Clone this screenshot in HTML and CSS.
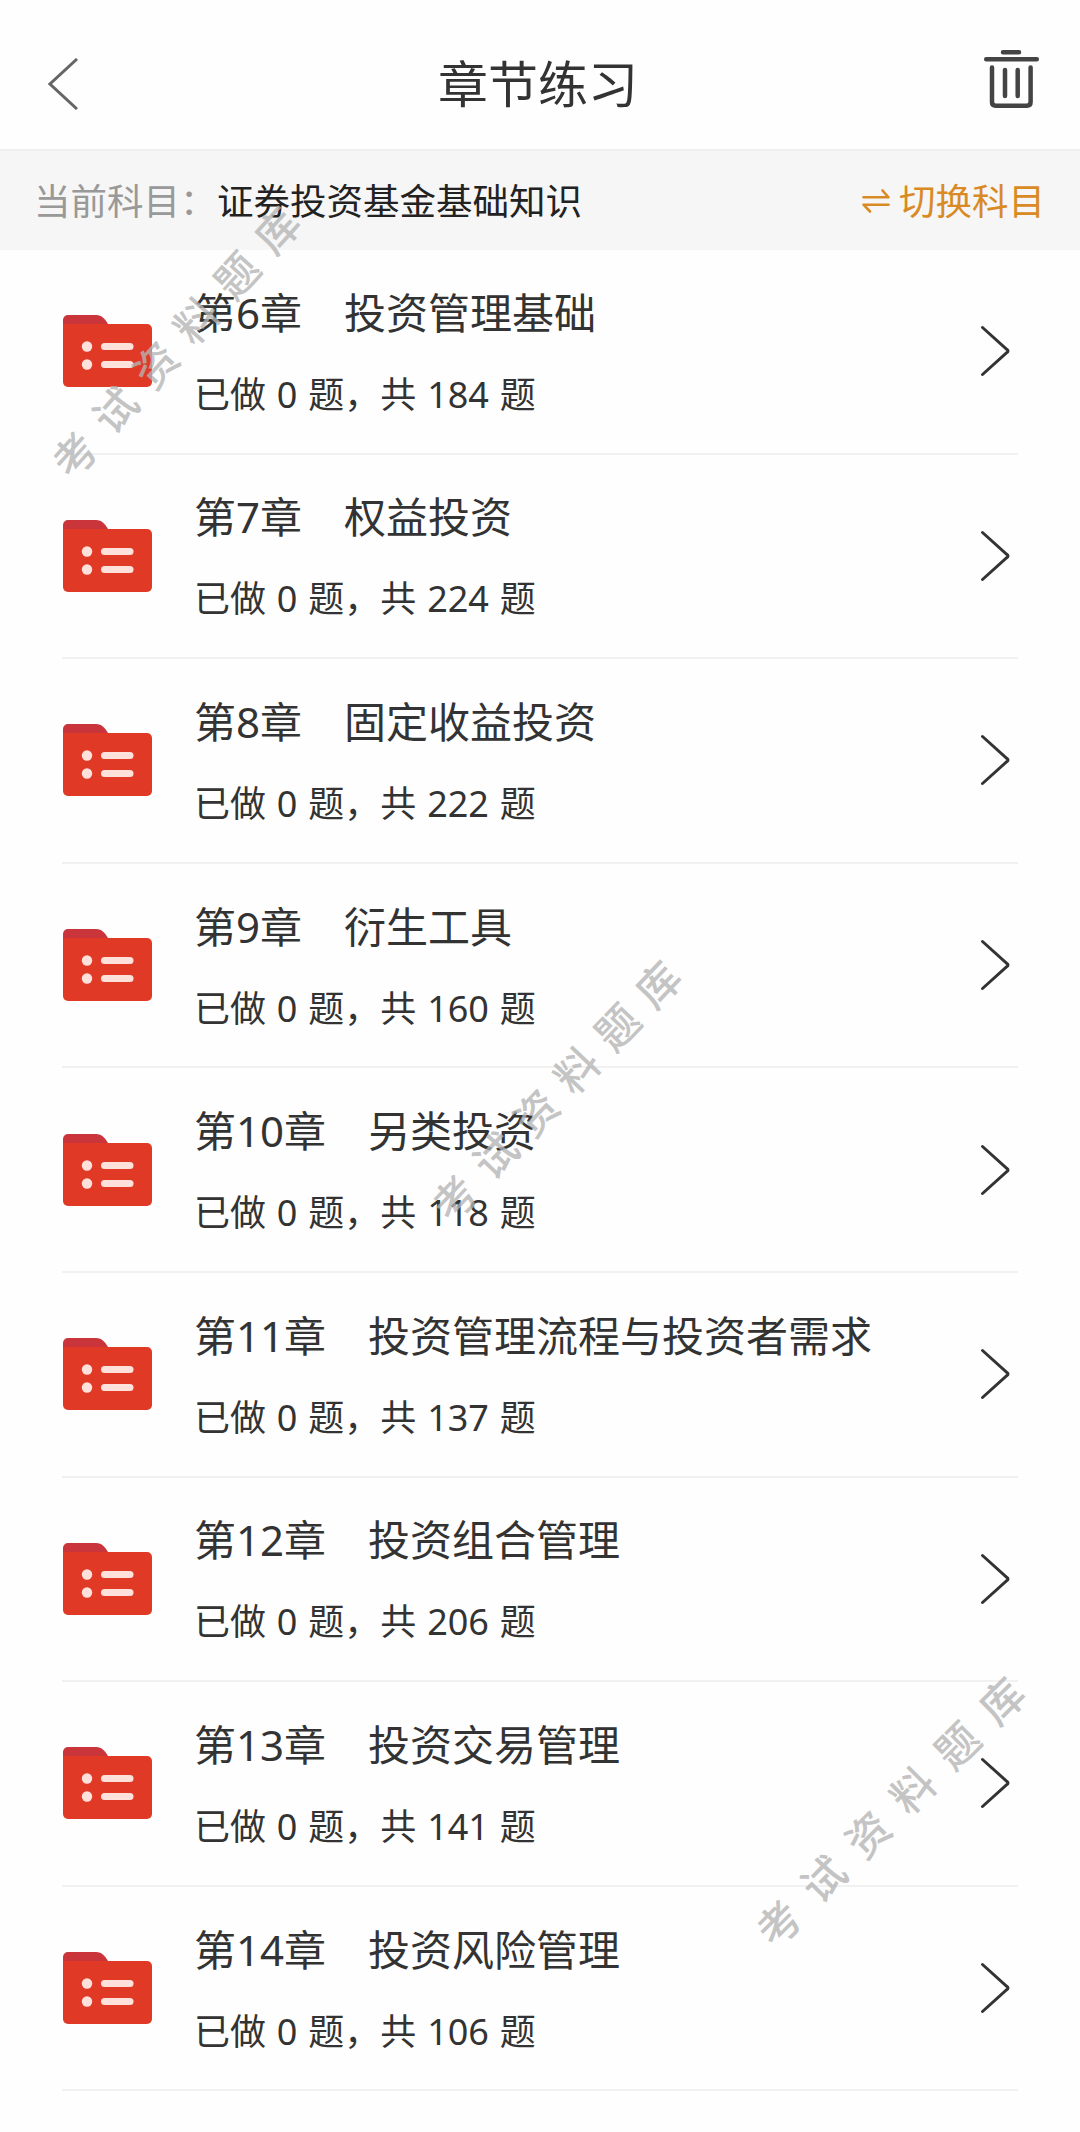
FILE: index.html
```html
<!DOCTYPE html>
<html lang="zh-CN">

<head>
    <meta charset="UTF-8">
    <title>章节练习</title>
    <link rel="stylesheet" href="styles.css">
</head>

<body>
    <!-- Shared icons -->
    <svg class="sprite" width="0" height="0">
        <symbol id="folder" viewBox="0 0 90 74">
            <path d="M1 20V6a5 5 0 0 1 5-5h28c6 0 9 4 12 9v10z" fill="#c9353b" />
            <path d="M1 10h84a5 5 0 0 1 5 5v53a5 5 0 0 1-5 5H6a5 5 0 0 1-5-5z" fill="#e03a27" />
            <circle cx="25" cy="32.500" r="5.200" fill="#ffe1dc" />
            <circle cx="25" cy="50.500" r="5.200" fill="#ffe1dc" />
            <rect x="39" y="29" width="32.500" height="7" rx="3.500" fill="#ffe1dc" />
            <rect x="39" y="47" width="32.500" height="7" rx="3.500" fill="#ffe1dc" />
        </symbol>
        <symbol id="arrow" viewBox="0 0 30 52">
            <path d="M2.500 2.500L27 24.500q2 1.500 0 3L2.500 49.500" fill="none" stroke="#333" stroke-width="3" stroke-linecap="round" />
        </symbol>
    </svg>

    <!-- Header -->
    <header class="header">
        <svg class="back" viewBox="0 0 30 52">
            <path d="M29 1L2 26l27 25" fill="none" stroke="#666" stroke-width="3" />
        </svg>
        <h1 class="title">章节练习</h1>
        <svg class="trash" viewBox="0 0 56 60" fill="none" stroke="#444" stroke-width="4.500" stroke-linecap="round">
            <path d="M19.500 3.300h16M2.700 10.300h50.600" />
            <path d="M8.500 18.500V53q0 3.700 3.700 3.700h31.200q3.700 0 3.700-3.700V18.500" />
            <path d="M21.500 21v26M34.200 21v26" />
        </svg>
    </header>

    <!-- Current subject -->
    <div class="subject">
        <span class="subject-label">当前科目：</span>
        <span class="subject-name">证券投资基金基础知识</span>
        <a class="switch">
            <svg class="switch-icon" viewBox="0 0 28 26" fill="none" stroke="#d98a24" stroke-width="2.600" stroke-linecap="round" stroke-linejoin="round">
                <path d="M1.500 9.300h25L20.500 2.500M26.500 16.700h-25l6.500 6.800" />
            </svg>
            <span>切换科目</span>
        </a>
    </div>

    <!-- Chapter list -->
    <ul class="chapters">
        <li class="chapter">
            <svg class="folder"><use href="#folder" /></svg>
            <div class="info">
                <div class="name">第6章　投资管理基础</div>
                <div class="count">已做 0 题，共 184 题</div>
            </div>
            <svg class="arrow"><use href="#arrow" /></svg>
        </li>
        <li class="chapter">
            <svg class="folder"><use href="#folder" /></svg>
            <div class="info">
                <div class="name">第7章　权益投资</div>
                <div class="count">已做 0 题，共 224 题</div>
            </div>
            <svg class="arrow"><use href="#arrow" /></svg>
        </li>
        <li class="chapter">
            <svg class="folder"><use href="#folder" /></svg>
            <div class="info">
                <div class="name">第8章　固定收益投资</div>
                <div class="count">已做 0 题，共 222 题</div>
            </div>
            <svg class="arrow"><use href="#arrow" /></svg>
        </li>
        <li class="chapter">
            <svg class="folder"><use href="#folder" /></svg>
            <div class="info">
                <div class="name">第9章　衍生工具</div>
                <div class="count">已做 0 题，共 160 题</div>
            </div>
            <svg class="arrow"><use href="#arrow" /></svg>
        </li>
        <li class="chapter">
            <svg class="folder"><use href="#folder" /></svg>
            <div class="info">
                <div class="name">第10章　另类投资</div>
                <div class="count">已做 0 题，共 118 题</div>
            </div>
            <svg class="arrow"><use href="#arrow" /></svg>
        </li>
        <li class="chapter">
            <svg class="folder"><use href="#folder" /></svg>
            <div class="info">
                <div class="name">第11章　投资管理流程与投资者需求</div>
                <div class="count">已做 0 题，共 137 题</div>
            </div>
            <svg class="arrow"><use href="#arrow" /></svg>
        </li>
        <li class="chapter">
            <svg class="folder"><use href="#folder" /></svg>
            <div class="info">
                <div class="name">第12章　投资组合管理</div>
                <div class="count">已做 0 题，共 206 题</div>
            </div>
            <svg class="arrow"><use href="#arrow" /></svg>
        </li>
        <li class="chapter">
            <svg class="folder"><use href="#folder" /></svg>
            <div class="info">
                <div class="name">第13章　投资交易管理</div>
                <div class="count">已做 0 题，共 141 题</div>
            </div>
            <svg class="arrow"><use href="#arrow" /></svg>
        </li>
        <li class="chapter">
            <svg class="folder"><use href="#folder" /></svg>
            <div class="info">
                <div class="name">第14章　投资风险管理</div>
                <div class="count">已做 0 题，共 106 题</div>
            </div>
            <svg class="arrow"><use href="#arrow" /></svg>
        </li>
    </ul>

    <!-- Watermarks over the page -->
    <div class="watermark mark-top">考试资料题库</div>
    <div class="watermark mark-middle">考试资料题库</div>
    <div class="watermark mark-bottom">考试资料题库</div>
</body>

</html>
```

FILE: styles.css
```css
* {
    box-sizing: border-box;
}

body {
    position: relative;
    margin: 0;
    height: 2132px;
    overflow: hidden;
    background-color: #fefefe;
    color: #333;
    font-family: "Noto Sans", "Noto Sans CJK SC", sans-serif;
}

.sprite {
    display: block;
}

/* Header */
.header {
    display: flex;
    align-items: center;
    justify-content: space-between;
    height: 151px;
    padding: 18px 40px 0 48px;
    border-bottom: 2px solid #efefef;
}

.back {
    width: 30px;
    height: 52px;
    margin-right: 15px;
}

.title {
    margin: 0;
    font-size: 50px;
    font-weight: 400;
    line-height: 60px;
}

.trash {
    width: 57px;
    height: 60px;
    margin-bottom: 9px;
}

/* Current subject */
.subject {
    display: flex;
    align-items: center;
    height: 99px;
    padding: 0 35px 0 34px;
    background-color: #f6f6f6;
    font-size: 36.5px;
    line-height: 50px;
    white-space: nowrap;
}

.subject-label {
    width: 183px;
    color: #999;
}

.subject-name {
    color: #222;
}

.switch {
    display: flex;
    align-items: center;
    gap: 9px;
    margin-left: auto;
    color: #d98a24;
}

.switch-icon {
    width: 28px;
    height: 26px;
}

/* Chapter list */
.chapters {
    margin: 0;
    padding: 0 62px;
    list-style: none;
}

.chapter {
    display: flex;
    align-items: center;
    height: 204.600px;
    border-bottom: 2px solid #f1f1f1;
}

.folder {
    flex: none;
    width: 90px;
    height: 74px;
}

.info {
    flex: 1;
    margin-left: 42px;
}

.name {
    font-size: 42px;
    line-height: 60px;
}

.count {
    margin-top: 27px;
    font-size: 36px;
    line-height: 50px;
    word-spacing: 1.500px;
}

.arrow {
    flex: none;
    width: 30px;
    height: 52px;
    margin-right: 8px;
}

/* Watermarks */
.watermark {
    position: absolute;
    width: 366px;
    height: 60px;
    color: rgba(180, 180, 180, 0.8);
    font-size: 43px;
    font-weight: 500;
    line-height: 60px;
    letter-spacing: 18px;
    padding-left: 9px;
    white-space: nowrap;
    pointer-events: none;
}

.mark-top {
    left: -6px;
    top: 312px;
    transform: rotate(-48deg);
    letter-spacing: 17.500px;
}

.mark-middle {
    left: 377px;
    top: 1058px;
    transform: rotate(-46.500deg);
    letter-spacing: 16px;
}

.mark-bottom {
    left: 704px;
    top: 1786px;
    transform: rotate(-45deg);
    letter-spacing: 20px;
}
```
